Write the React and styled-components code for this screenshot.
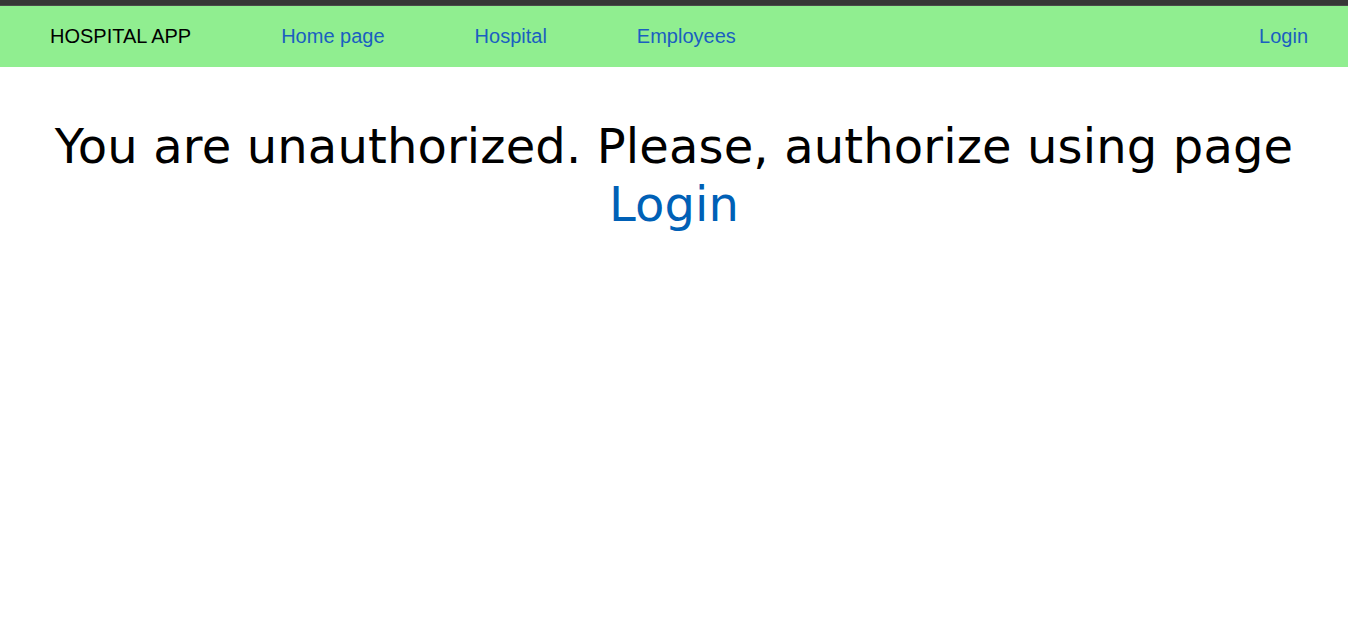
import React from "react";
import styled, { createGlobalStyle } from "styled-components";

const GlobalStyle = createGlobalStyle`
  html, body {
    margin: 0;
    padding: 0;
    background: #ffffff;
  }
`;

const TopStrip = styled.div`
  height: 6px;
  background: #363636;
  border-bottom: 1px solid #4a4a4a;
  box-sizing: border-box;
`;

const Navbar = styled.nav`
  display: flex;
  align-items: center;
  height: 61px;
  padding: 0 40px 0 50px;
  background: #90ee90;
  font-family: "Liberation Sans", Arial, sans-serif;
  font-size: 20px;
`;

const NavGroup = styled.div`
  display: flex;
  align-items: center;
  gap: 90px;
`;

const Brand = styled.span`
  color: #000000;
`;

const NavLink = styled.a`
  color: #1a5fc0;
  text-decoration: none;
  margin-left: ${({ $push }) => ($push ? "auto" : "0")};
`;

const Message = styled.h1`
  margin: 50px 0 0;
  text-align: center;
  font-family: "DejaVu Sans", Verdana, sans-serif;
  font-weight: normal;
  font-size: 48px;
  line-height: 58px;
  letter-spacing: 0.14px;
  color: #000000;
`;

const MessageLink = styled.a`
  color: #0060b6;
  text-decoration: none;
`;

export default function App() {
  const links = ["Home page", "Hospital", "Employees"];
  return (
    <>
      <GlobalStyle />
      <TopStrip />
      <Navbar>
        <NavGroup>
          <Brand>HOSPITAL APP</Brand>
          {links.map((text) => (
            <NavLink key={text} href="#">
              {text}
            </NavLink>
          ))}
        </NavGroup>
        <NavLink $push href="#">
          Login
        </NavLink>
      </Navbar>
      <Message>
        You are unauthorized. Please, authorize using page{" "}
        <MessageLink href="#">Login</MessageLink>
      </Message>
    </>
  );
}
